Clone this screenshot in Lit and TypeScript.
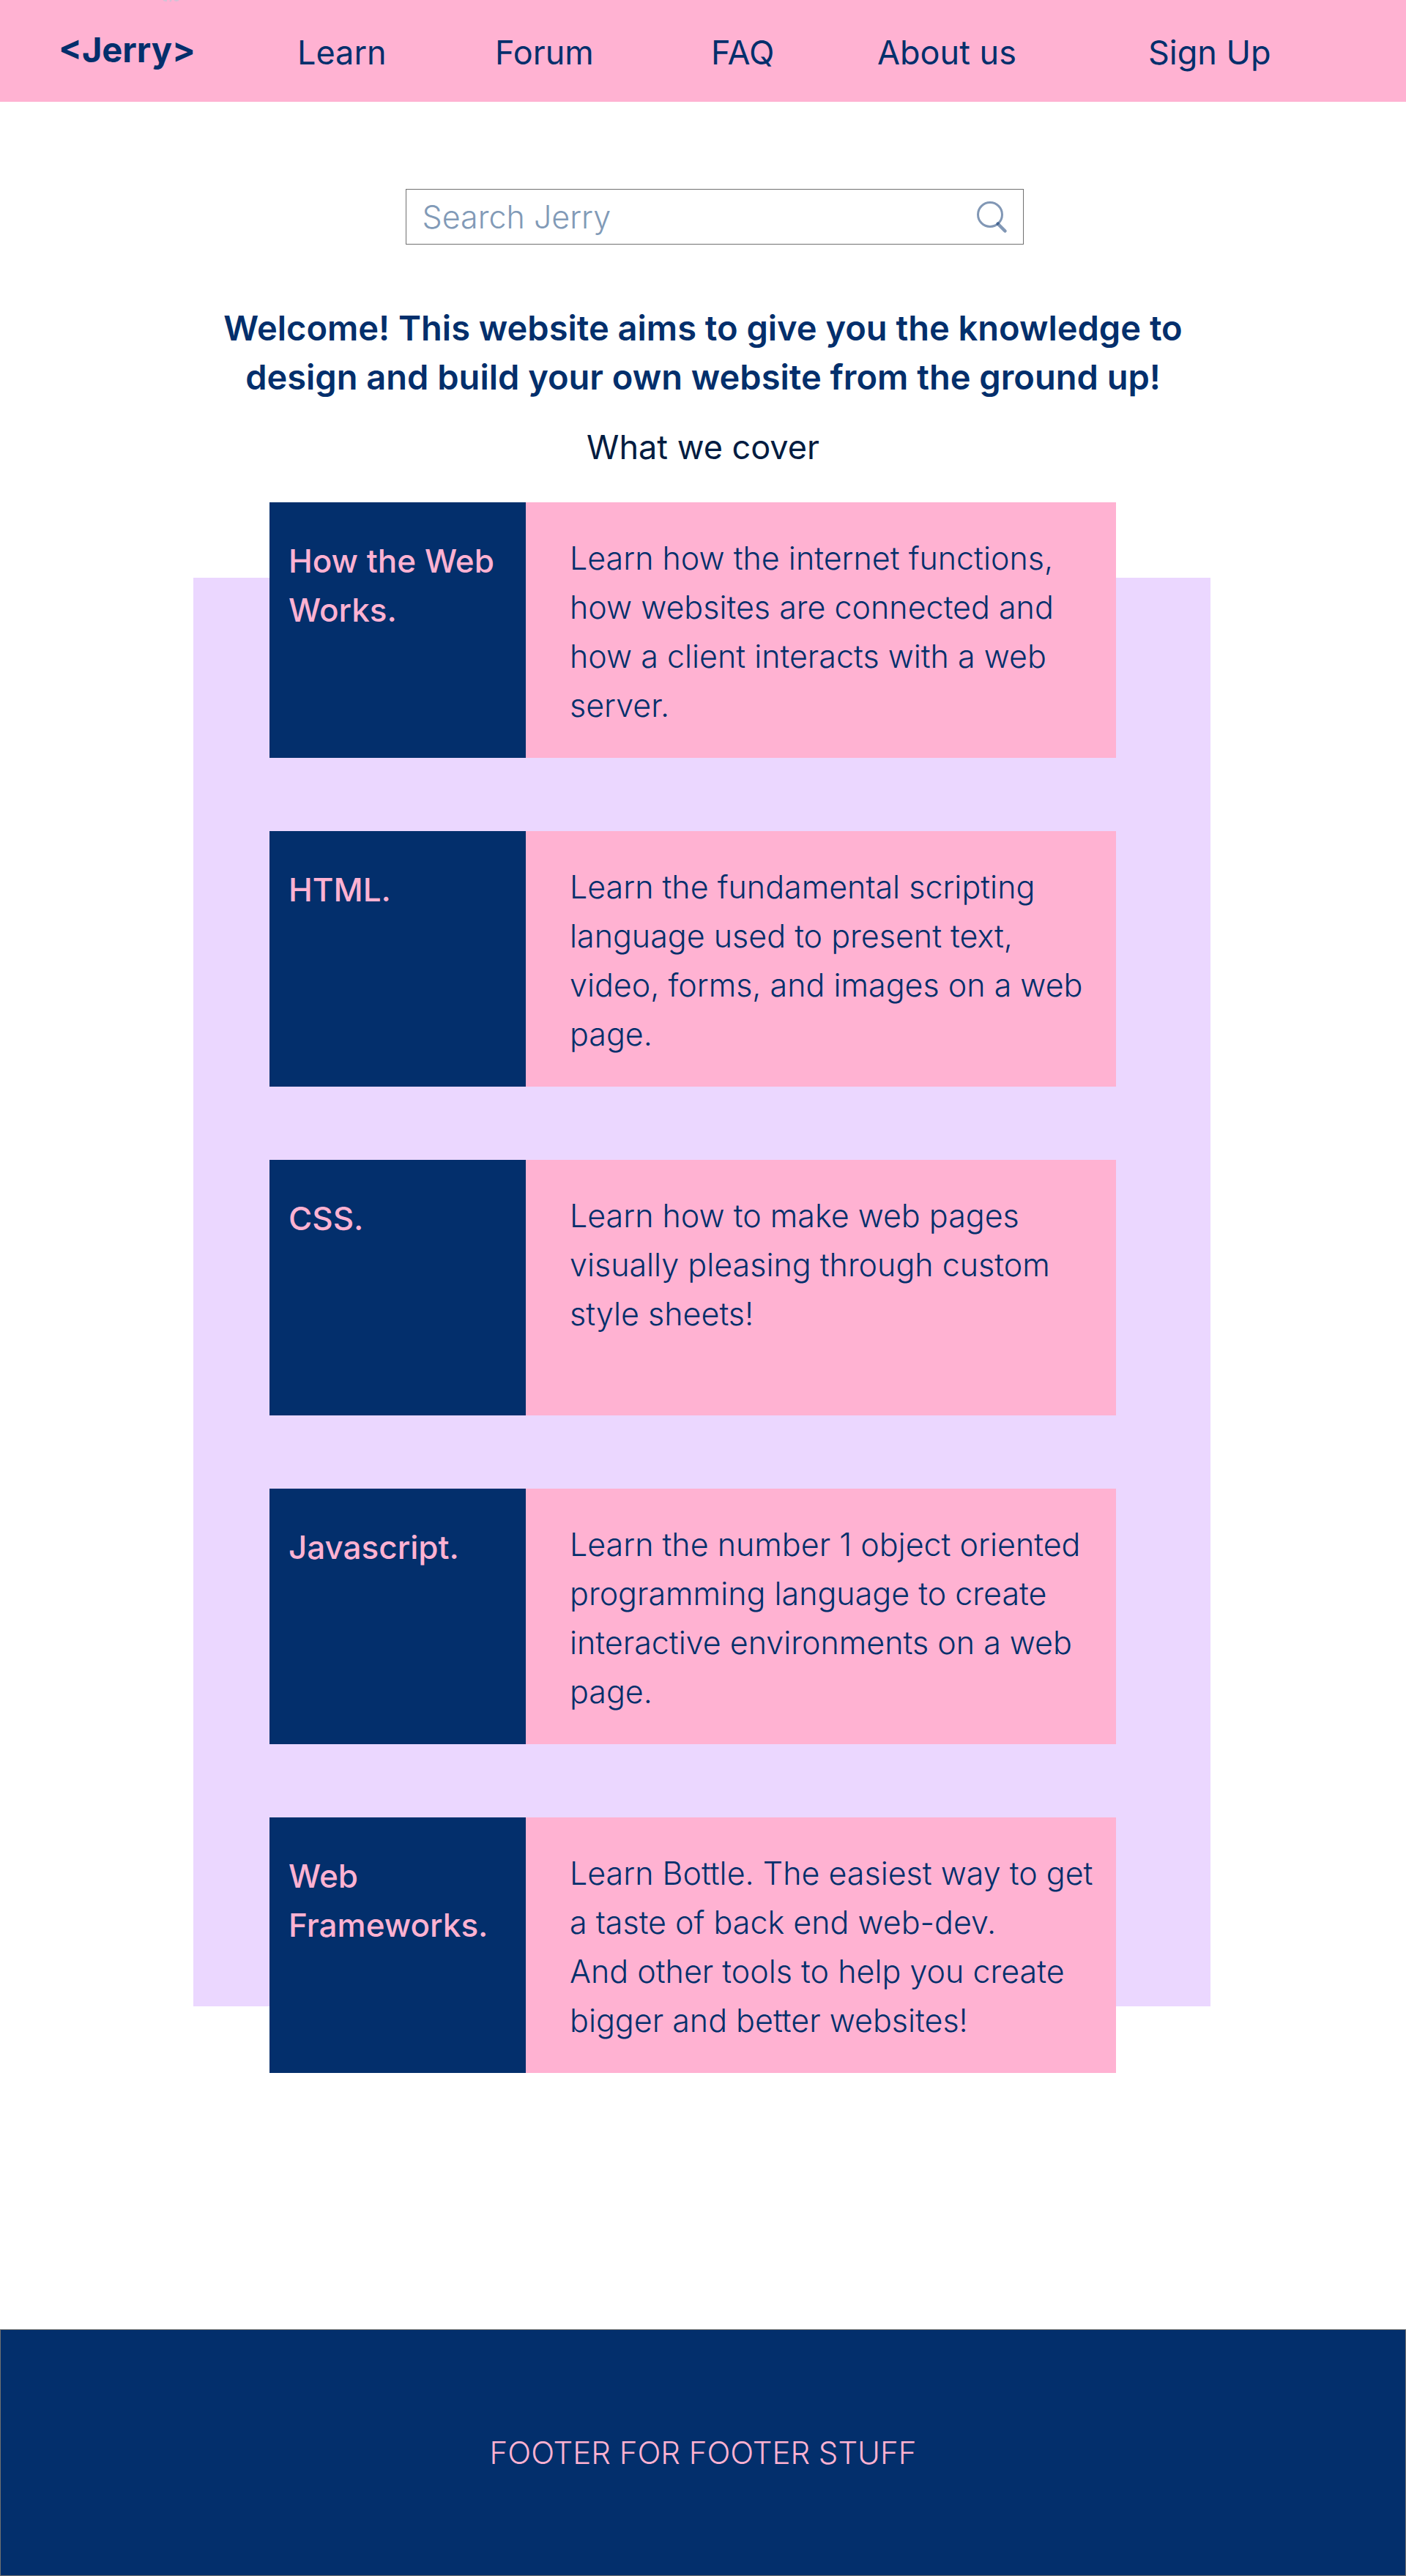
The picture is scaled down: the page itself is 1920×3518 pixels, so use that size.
import { LitElement, html, css } from "lit";
import { customElement } from "lit/decorators.js";

interface Topic {
  title: string;
  lines: string[];
}

const LINKS = ["Learn", "Forum", "FAQ", "About us", "Sign Up"];

const TOPICS: Topic[] = [
  { title: "How the Web Works.", lines: ["Learn how the internet functions,", "how websites are connected and", "how a client interacts with a web", "server."] },
  { title: "HTML.", lines: ["Learn the fundamental scripting", "language used to present text,", "video, forms, and images on a web", "page."] },
  { title: "CSS.", lines: ["Learn how to make web pages", "visually pleasing through custom", "style sheets!"] },
  { title: "Javascript.", lines: ["Learn the number 1 object oriented", "programming language to create", "interactive environments on a web", "page."] },
  { title: "Web Frameworks.", lines: ["Learn Bottle. The easiest way to get", "a taste of back end web-dev.", "And other tools to help you create", "bigger and better websites!"] },
];

@customElement("app-root")
export class AppRoot extends LitElement {
  static styles = css`
    :host {
      display: flex;
      flex-direction: column;
      min-height: 100vh;
      background: #fff;
      color: #032f6c;
      font-family: Inter, "Open Sans", sans-serif;
      font-size: 43px;
      line-height: 67px;
    }
    * { box-sizing: border-box; margin: 0; }
    a { color: inherit; text-decoration: none; }
    .bar {
      position: relative;
      display: grid;
      grid-template-columns: 326fr 270fr 295fr 227fr 370fr 352fr;
      align-items: center;
      height: 139px;
      padding-left: 80px;
      background: #ffb2d2;
      font-size: 45px;
    }
    .ticks { position: absolute; top: 0; left: 222px; }
    .brand { padding-bottom: 4px; font-size: 47px; font-weight: 700; }
    .link { padding-top: 4px; white-space: nowrap; }
    .search {
      display: flex;
      align-items: center;
      align-self: center;
      width: 44%;
      height: 76px;
      margin: 119px 0 80px 32px;
      padding: 0 20px 0 22px;
      border: 1px solid #707070;
    }
    .field {
      flex: 1;
      min-width: 0;
      border: 0;
      padding: 0;
      outline: 0;
      background: none;
      font: inherit;
      font-weight: 300;
      color: #032f6c;
    }
    .field::placeholder { color: #819ab7; opacity: 1; }
    .go { display: flex; padding: 0; border: 0; background: none; }
    .welcome { font-size: 47px; font-weight: 600; text-align: center; }
    .sub { margin: 29px 0 42px; font-weight: 400; font-size: 45px; text-align: center; color: #021c41; }
    .panel {
      margin: 0 267px 0 264px;
      padding: 0 129px 0 104px;
      background: linear-gradient(#ebd7ff, #ebd7ff) 0 103px / 100% 1951px no-repeat;
    }
    .list { display: flex; flex-direction: column; gap: 100px; padding: 0; list-style: none; }
    .card { display: grid; grid-template-columns: 350px 1fr; min-height: 349px; background: #ffb2d2; }
    .title { padding: 47px 20px 0 26px; background: #032f6c; color: #ffb2d2; font-size: 44px; font-weight: 500; }
    .text { padding: 43px 0 0 60px; font-weight: 300; }
    .line { display: block; white-space: nowrap; }
    .foot {
      margin-top: auto;
      height: 337px;
      display: flex;
      align-items: center;
      justify-content: center;
      border: 1px solid #707070;
      background: #032f6c;
      color: #ffb2d2;
      font-weight: 300;
      font-size: 42px;
    }
  `;

  render() {
    return html`
      <nav class="bar" aria-label="Main">
        <svg class="ticks" width="24" height="3" viewBox="0 0 24 3" fill="none" stroke="#d3c1d6" stroke-width="2" aria-hidden="true">
          <path d="M1 0 4 1H6M12 0 10 2M16 0 19 1 22 0" />
        </svg>
        <a class="brand" href="#">&lt;Jerry&gt;</a>
        ${LINKS.map((l) => html`<a class="link" href="#">${l}</a>`)}
      </nav>
      <form class="search" role="search" @submit=${(e: Event) => e.preventDefault()}>
        <input class="field" type="search" aria-label="Search Jerry" placeholder="Search Jerry" />
        <button class="go" type="submit" aria-label="Search">
          <svg width="46" height="46" viewBox="0 0 46 46" fill="none" stroke="#032f6c" stroke-opacity="0.5">
            <circle cx="21" cy="20" r="16.5" stroke-width="3" />
            <path d="M31.5 32.5 41.5 42.5" stroke-linecap="round" stroke-width="4.5" />
          </svg>
        </button>
      </form>
      <h1 class="welcome">Welcome! This website aims to give you the knowledge to<br />design and build your own website from the ground up!</h1>
      <h2 class="sub">What we cover</h2>
      <main class="panel">
        <ul class="list">
          ${TOPICS.map((t) => html`
            <li class="card">
              <h3 class="title">${t.title}</h3>
              <p class="text">${t.lines.map((l) => html`<span class="line">${l}</span>`)}</p>
            </li>`)}
        </ul>
      </main>
      <footer class="foot">FOOTER FOR FOOTER STUFF</footer>
    `;
  }
}
